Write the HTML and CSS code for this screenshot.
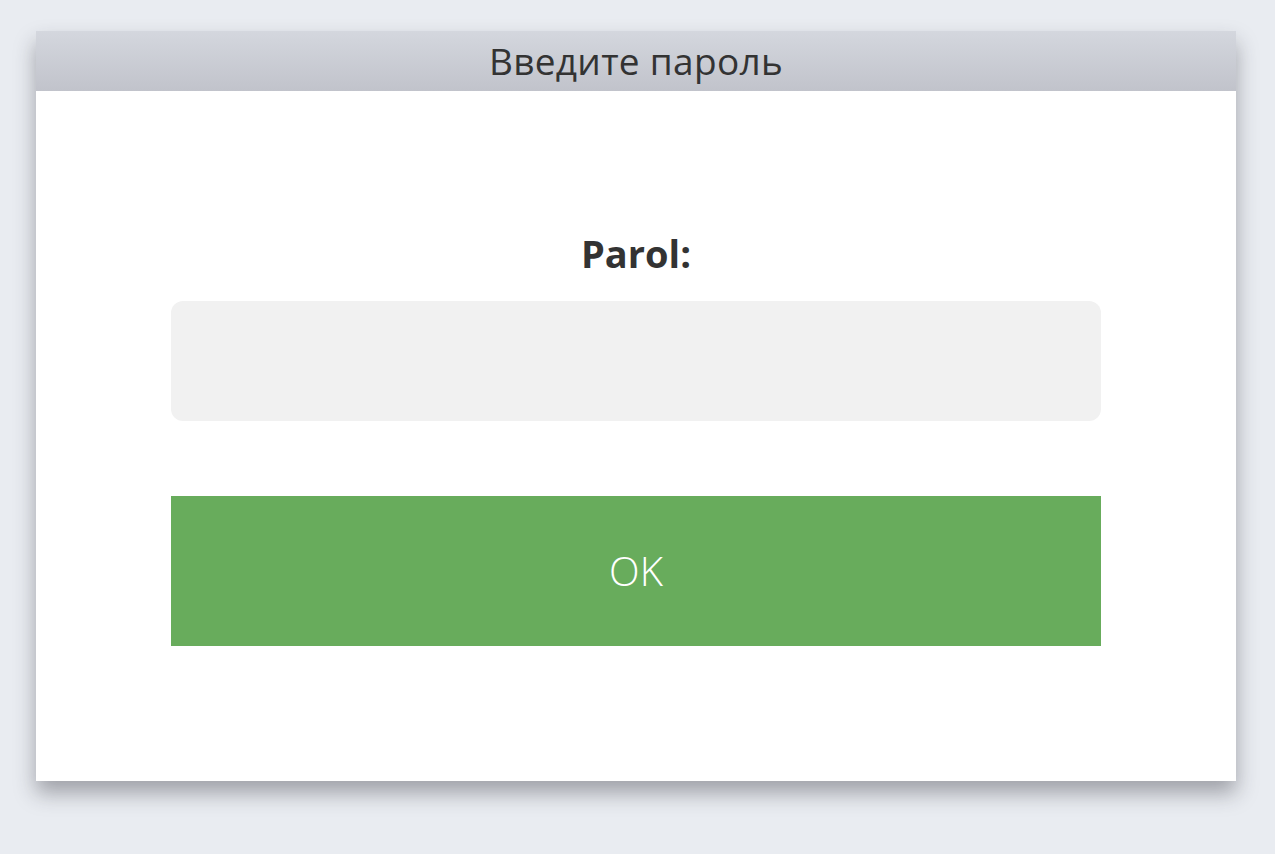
FILE: index.html
```html
<!DOCTYPE html>
<html lang="ru">
<head>
<meta charset="utf-8">
<title>Введите пароль</title>
<link rel="stylesheet" href="styles.css">
</head>
<body>
<div class="page">
  <div class="dialog">
    <div class="dialog-header">Введите пароль</div>
    <div class="dialog-body">
      <label class="field-label" for="pwd">Parol:</label>
      <input class="field-input" id="pwd" type="password">
      <button class="ok-button" type="button">OK</button>
    </div>
  </div>
</div>
</body>
</html>
```
FILE: styles.css
```css
html, body {
  margin: 0;
  padding: 0;
  background: #e9ecf1;
  font-family: "Open Sans", "Noto Sans", sans-serif;
  color: #333333;
}
.page {
  padding: 31px 39px 0 36px;
  height: 854px;
  box-sizing: border-box;
}
.dialog {
  width: 1200px;
  background: #ffffff;
  box-shadow: 0 12px 20px rgba(40, 40, 50, 0.38);
}
.dialog-header {
  height: 60px;
  background: linear-gradient(to bottom, #d4d7de, #c1c3cb);
  text-align: center;
  font-size: 37px;
  letter-spacing: 0.3px;
  line-height: 60px;
  color: #333333;
}
.dialog-body {
  height: 690px;
  box-sizing: border-box;
  padding: 142px 135px 0;
  display: flex;
  flex-direction: column;
  align-items: center;
}
.field-label {
  font-weight: 700;
  font-size: 38px;
  line-height: 40px;
  color: #333333;
}
.field-input {
  margin-top: 28px;
  width: 930px;
  height: 120px;
  border: none;
  border-radius: 12px;
  background: #f1f1f1;
  box-sizing: border-box;
  outline: none;
}
.ok-button {
  margin-top: 75px;
  width: 930px;
  height: 150px;
  padding: 0;
  border: none;
  border-radius: 0;
  background: #68ac5c;
  color: #ffffff;
  font-family: "Open Sans", "Noto Sans", sans-serif;
  font-weight: 300;
  font-size: 40px;
  line-height: 142px;
}
```
